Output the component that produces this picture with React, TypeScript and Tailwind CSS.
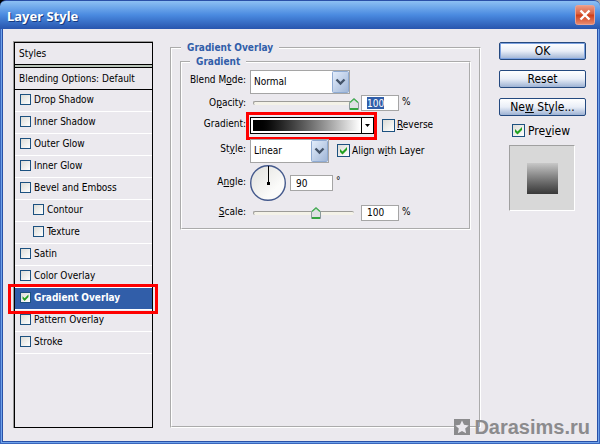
import { useState, type ReactNode } from "react";

const effects = [
  { label: "Drop Shadow" },
  { label: "Inner Shadow" },
  { label: "Outer Glow" },
  { label: "Inner Glow" },
  { label: "Bevel and Emboss" },
  { label: "Contour", nested: true },
  { label: "Texture", nested: true },
  { label: "Satin" },
  { label: "Color Overlay" },
  { label: "Gradient Overlay" },
  { label: "Pattern Overlay" },
  { label: "Stroke" },
];

function Check({ size, defaultChecked = false }: { size: "sm" | "md"; defaultChecked?: boolean }) {
  return (
    <span className={size === "sm" ? "grid w-[11px] h-[11px] shrink-0" : "grid w-[13px] h-[13px] shrink-0"}>
      <input
        type="checkbox"
        defaultChecked={defaultChecked}
        className="peer appearance-none col-start-1 row-start-1 w-full h-full border border-[#1c5180] bg-linear-to-br from-[#dcdcd7] to-white"
      />
      <svg viewBox="0 0 13 13" className="col-start-1 row-start-1 w-full h-full hidden peer-checked:block pointer-events-none">
        <path d="M3 5v3l2.500 2.500L10 6V3L5.500 7.500z" fill="#21a121" />
      </svg>
    </span>
  );
}

function Dropdown({ id, value, width }: { id: string; value: string; width: string }) {
  return (
    <div className={`relative h-6 ${width}`}>
      <select id={id} className="appearance-none block w-full h-full bg-white border border-[#a5a5a5] pl-[3px] pr-6 outline-none">
        <option>{value}</option>
      </select>
      <svg viewBox="0 0 17 22" className="absolute right-px top-px w-[17px] h-[22px] pointer-events-none">
        <defs>
          <linearGradient id={`${id}-face`} x2="1" y2="1">
            <stop offset="0" stopColor="#e4eefc" />
            <stop offset="1" stopColor="#9fb5d6" />
          </linearGradient>
        </defs>
        <rect x="0.5" y="0.5" width="16" height="21" rx="1" fill={`url(#${id}-face)`} stroke="#8fabd3" />
        <path d="M4.500 8.500L8.500 12.500L12.500 8.500" fill="none" stroke="#44546a" strokeWidth="2.400" />
      </svg>
    </div>
  );
}

function Slider({ defaultValue, max, label }: { defaultValue: number; max: number; label: string }) {
  const [value, setValue] = useState(defaultValue);
  return (
    <div className="relative w-[108px] h-[15px] flex items-center pl-[3px] mr-[3px]">
      <span className="w-[101px] h-[4px] rounded-xs border-t border-l border-[#9d9c99] bg-[#f4f2e8]" />
      <svg
        viewBox="0 0 10 12"
        className="absolute top-0 w-[10px] h-[12px] mt-0.5 pointer-events-none"
        style={{ left: `${Math.round((value / max) * 99)}px` }}
      >
        <path d="M0.500 4.500L5 0.500L9.500 4.500V11.500H0.500z" fill="#dfe0e4" stroke="#8b9a9b" />
        <path d="M1 4.500L5 1L9 4.500" fill="none" stroke="#45b552" strokeWidth="1.300" />
        <path d="M1 11h8" stroke="#35a442" strokeWidth="2" />
      </svg>
      <input
        type="range"
        aria-label={label}
        max={max}
        value={value}
        onChange={(e) => setValue(Number(e.target.value))}
        className="absolute inset-0 w-full h-full opacity-0"
      />
    </div>
  );
}

function Row({ label, htmlFor, className, children }: { label: ReactNode; htmlFor: string; className: string; children: ReactNode }) {
  return (
    <div className={`flex items-center ${className}`}>
      <label htmlFor={htmlFor} className="w-16 shrink-0 text-right mr-1 whitespace-nowrap">
        {label}
      </label>
      {children}
    </div>
  );
}

const numberBox = "h-4 bg-white border border-[#a5a5a5] pl-[5px] outline-none";
const groupTitle = "px-1.5 text-[10px] leading-[14px] font-bold text-[#315ea9]";
const pushButton =
  "h-[18px] rounded-xs border border-[#24497f] bg-linear-to-b from-white via-[#e9eef7] to-[#9db2d3] flex items-center justify-center text-[12px] leading-none";

export default function App() {
  return (
    <div className="min-h-screen flex flex-col bg-[#3a66bd] text-[10px] leading-3 text-black font-['DejaVu_Sans_Condensed','DejaVu_Sans',sans-serif]">
      {/* Title bar */}
      <div className="relative z-10 bg-linear-to-r from-black to-[#a8a8a8]">
        <header className="h-[29px] flex items-center justify-between pl-[7px] pr-[5px] rounded-t-md border-t border-[#2a50a8] bg-linear-to-b from-[#8dc0f3] via-[#4a8ae0] to-[#2855ae]">
          <h1 className="text-white text-[13px] leading-4 pt-0.5 font-bold font-['Noto_Sans',sans-serif] [text-shadow:1px_1px_0_#153a80]">
            Layer Style
          </h1>
          <button aria-label="Close" className="w-[20px] h-[20px]">
            <svg viewBox="0 0 20 20" className="w-full h-full">
              <defs>
                <linearGradient id="close-face" x2="0" y2="1">
                  <stop offset="0" stopColor="#ee9c88" />
                  <stop offset="0.45" stopColor="#d9603f" />
                  <stop offset="0.5" stopColor="#cf3d17" />
                  <stop offset="1" stopColor="#e88c72" />
                </linearGradient>
              </defs>
              <rect x="0.500" y="0.500" width="19" height="19" rx="2" fill="url(#close-face)" stroke="#e9a394" />
              <path d="M5.500 5.500l9 9M14.500 5.500l-9 9" stroke="#fff" strokeWidth="2.400" />
            </svg>
          </button>
        </header>
      </div>

      <main className="flex-1 flex mx-0.5 mb-0.5 pl-2.5 pr-[11px] pt-3 pb-[13px] bg-[#ebe9ee] border-x border-b border-[#2850a8] shadow-[0_0_0_1px_#6fa3ea] relative">
        {/* Effects list */}
        <section className="w-[140px] shrink-0 border-t border-l border-[#9a9a9a]">
          <div className="h-full border border-black">
            <h2 className="h-[21px] flex items-center pl-1">Styles</h2>
            <div className="h-[4px] border-y border-black bg-[#b9c4b9]" />
            <h2 className="h-[22px] flex items-center pl-1 border-b border-black whitespace-nowrap">Blending Options: Default</h2>
            <ul>
              {effects.map(({ label, nested }) => {
                const selected = label === "Gradient Overlay";
                return (
                  <li key={label} className={`relative h-[22px] border-b border-white ${selected ? "bg-[#315ea9] text-white font-bold" : ""}`}>
                    <label className={`h-full flex items-center gap-[3px] pb-0.5 ${nested ? "pl-[18px]" : "pl-[5px]"}`}>
                      <Check size="sm" defaultChecked={selected} />
                      {label}
                    </label>
                    {selected && (
                      <span className="absolute -left-[7px] -right-[6px] -top-1 h-[30px] border-3 border-[#fe0000] pointer-events-none" />
                    )}
                  </li>
                );
              })}
            </ul>
          </div>
        </section>

        {/* Settings */}
        <fieldset className="flex-1 ml-[17px] border-2 border-white [border-style:groove] px-2">
          <legend className={`${groupTitle} ml-px`}>Gradient Overlay</legend>
          <fieldset className="border-2 border-white [border-style:groove] pb-1.5">
            <legend className={`${groupTitle} ml-2`}>Gradient</legend>
            <Row className="h-[25px] [&>label]:pb-1" htmlFor="blend" label={<>Blend M<u>o</u>de:</>}>
              <Dropdown id="blend" value="Normal" width="w-[100px]" />
            </Row>
            <Row className="h-[18px]" htmlFor="opacity" label={<>O<u>p</u>acity:</>}>
              <Slider label="Opacity slider" defaultValue={100} max={100} />
              <input id="opacity" defaultValue="100" className={`${numberBox} w-[38px] [background:linear-gradient(#315ea9,#315ea9)_5px_1px/17px_12px_no-repeat_#fff] text-white`} />
              <span className="ml-[3px] pb-0.5">%</span>
            </Row>
            <Row className="h-[26px] [&>label:first-child]:pb-0.5" htmlFor="gradient" label="Gradient:">
              <div className="relative">
                <button id="gradient" className="flex w-[124px] h-[17px] border border-black bg-white p-0.5 pr-0">
                  <span className="flex-1 h-full bg-linear-to-r from-black to-white" />
                  <span className="w-[12px] -my-0.5 ml-px h-[15px] border-l border-black flex items-center justify-center">
                    <svg viewBox="0 0 5 3" className="w-[5px] h-[3px]">
                      <path d="M0 0h5L2.500 3z" />
                    </svg>
                  </span>
                </button>
                <span className="absolute -left-1 -top-[5px] w-[131px] h-7 border-3 border-[#fe0000] pointer-events-none" />
              </div>
              <label className="ml-2 flex items-center gap-0.5">
                <Check size="md" />
                <span><u>R</u>everse</span>
              </label>
            </Row>
            <Row className="h-[25px] [&>label:first-child]:pb-1" htmlFor="style" label={<>St<u>y</u>le:</>}>
              <Dropdown id="style" value="Linear" width="w-[79px]" />
              <label className="ml-2 flex items-center gap-0.5">
                <Check size="md" defaultChecked />
                <span>Align w<u>i</u>th Layer</span>
              </label>
            </Row>
            <Row className="h-[40px] [&>label]:pb-0.5" htmlFor="angle" label={<>A<u>n</u>gle:</>}>
              <svg viewBox="0 0 36 36" className="w-9 h-9 mr-1">
                <defs>
                  <linearGradient id="dial" x2="1" y2="1">
                    <stop offset="0" stopColor="#e0e0dc" />
                    <stop offset="0.700" stopColor="#fbfbfa" />
                  </linearGradient>
                </defs>
                <circle cx="18" cy="18" r="17.300" fill="url(#dial)" stroke="#44598c" strokeWidth="1.400" />
                <path d="M18.500 1v17" stroke="#000" />
                <rect x="17" y="17" width="3" height="3" />
              </svg>
              <input id="angle" defaultValue="90" className={`${numberBox} w-[43px]`} />
              <span className="ml-[3px] pb-1">°</span>
            </Row>
            <Row className="h-[19px] [&>label]:pb-0.5" htmlFor="scale" label={<><u>S</u>cale:</>}>
              <Slider label="Scale slider" defaultValue={92} max={150} />
              <input id="scale" defaultValue="100" className={`${numberBox} w-[38px]`} />
              <span className="ml-[3px] pb-0.5">%</span>
            </Row>
          </fieldset>
        </fieldset>

        {/* Actions */}
        <aside className="w-[87px] shrink-0 ml-[18px] pt-px flex flex-col gap-2.5">
          <button className={`${pushButton} shadow-[inset_0_0_0_1px_#7da2e0]`}>OK</button>
          <button className={pushButton}>Reset</button>
          <button className={pushButton}>
            <span>Ne<u>w</u> Style...</span>
          </button>
          <label className="flex items-center pl-[13px] gap-[3px] -mt-0.5 h-[13px] text-[12px]">
            <Check size="md" defaultChecked />
            <span>Pre<u>v</u>iew</span>
          </label>
          <div className="w-[66px] h-[66px] ml-2.5 -mt-0.5 flex items-center justify-center bg-[#d8d8d8] border border-t-[#a0a0a0] border-l-[#a0a0a0] border-b-white border-r-white">
            <span className="w-[31px] h-[31px] bg-linear-to-b from-[#c8c8c8] to-[#383838]" />
          </div>
        </aside>

        {/* Watermark */}
        <div className="absolute right-[7px] bottom-[2px] flex items-center gap-1 text-[#8b8b8d] font-['Liberation_Sans',sans-serif] font-bold text-[20px] leading-6">
          <svg viewBox="0 0 16 16" className="w-4 h-4">
            <rect width="16" height="16" fill="#8b8b8d" />
            <path d="M8 1.500l2 4.300 4.700.6-3.500 3.200.9 4.700L8 12l-4.100 2.300.9-4.700L1.300 6.400 6 5.800z" fill="#ebe9ee" />
          </svg>
          Darasims.ru
        </div>
      </main>
    </div>
  );
}
